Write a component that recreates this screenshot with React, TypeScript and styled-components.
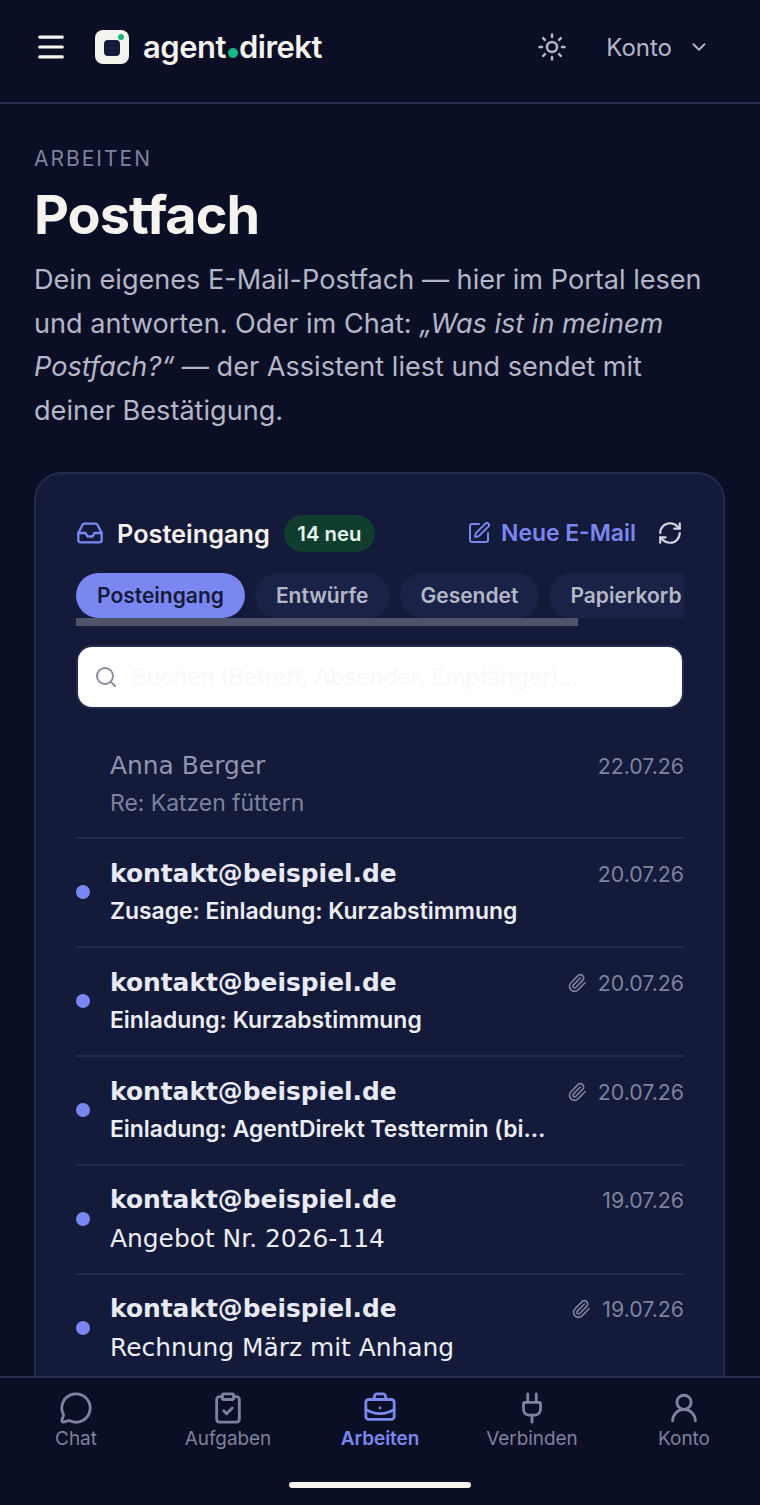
import React from "react";
import styled, { createGlobalStyle } from "styled-components";
import {
  BriefcaseBusiness,
  ChevronDown,
  ClipboardCheck,
  Inbox,
  Menu,
  MessageCircle,
  Paperclip,
  Plug,
  RefreshCw,
  Search,
  SquarePen,
  Sun,
  UserRound,
} from "lucide-react";

const GlobalStyle = createGlobalStyle`
  html, body { margin: 0; padding: 0; background: #0b0f26; }
  * { box-sizing: border-box; }
  body { font-family: Inter, "Liberation Sans", sans-serif; }
`;

const Page = styled.div`
  width: 760px;
  height: 1505px;
  display: flex;
  flex-direction: column;
  overflow: hidden;
  background: #0b0f26;
`;

const Header = styled.header`
  height: 104px;
  flex: none;
  display: flex;
  align-items: center;
  padding: 0 50px 8px 34px;
  border-bottom: 2px solid #232a4d;
`;

const MenuButton = styled.span`
  display: flex;
  color: #f5f3ee;
  margin-right: 27px;
`;

const LogoMark = styled.span`
  position: relative;
  width: 34px;
  height: 34px;
  border-radius: 8px;
  background: #f5f3ee;
  display: flex;
  align-items: center;
  justify-content: center;
  margin-right: 14px;

  &::before {
    content: "";
    width: 16px;
    height: 16px;
    margin-top: 2px;
    border-radius: 4px;
    background: #141a3a;
  }

  &::after {
    content: "";
    position: absolute;
    top: 4px;
    right: 5px;
    width: 6px;
    height: 6px;
    border-radius: 50%;
    background: #10b981;
  }
`;

const Wordmark = styled.span`
  font-size: 31px;
  font-weight: 600;
  letter-spacing: -0.5px;
  color: #f5f3ee;
  display: flex;
  align-items: baseline;
  margin-bottom: 2px;
`;

const WordDot = styled.span`
  width: 10px;
  height: 10px;
  margin: 0 1px 0 2px;
  border-radius: 50%;
  background: #10b981;
`;

const HeaderRight = styled.div`
  margin-left: auto;
  display: flex;
  align-items: center;
  color: #b4b7c6;
`;

const AccountLabel = styled.span`
  font-size: 24px;
  margin-left: 39px;
  margin-right: 16px;
`;

const Main = styled.main`
  flex: 1;
  min-height: 0;
  overflow: hidden;
  padding: 42px 35px 0 34px;
`;

const Eyebrow = styled.div`
  font-size: 21px;
  line-height: 26px;
  letter-spacing: 2px;
  color: #7e829c;
`;

const Title = styled.h1`
  margin: 12px 0 0;
  font-size: 54px;
  line-height: 62px;
  font-weight: 700;
  letter-spacing: -1px;
  color: #f5f3ee;
`;

const Intro = styled.p`
  margin: 12px 0 0;
  font-size: 27.1px;
  line-height: 43.6px;
  color: #b4b7c6;

  em {
    font-style: italic;
  }
`;

const Card = styled.section`
  margin-top: 40px;
  padding: 41px 40px 0;
  height: 960px;
  background: #141a3a;
  border: 2px solid #232a4d;
  border-radius: 28px;
`;

const CardHead = styled.div`
  display: flex;
  align-items: center;
  height: 36px;
  width: 608px;
`;

const CardTitle = styled.span`
  margin-left: 13px;
  font-size: 25.3px;
  font-weight: 600;
  color: #f5f3ee;
`;

const Badge = styled.span`
  margin-left: 14px;
  height: 37px;
  padding: 0 13.5px;
  display: flex;
  align-items: center;
  border-radius: 19px;
  background: #0f3d2e;
  color: #e6f5ee;
  font-size: 20.3px;
  font-weight: 600;
`;

const NewMail = styled.span`
  margin-left: auto;
  display: flex;
  align-items: center;
  gap: 10px;
  color: #7b87f0;
  font-size: 22.9px;
  font-weight: 600;
`;

const Refresh = styled.span`
  display: flex;
  margin-left: 21px;
  margin-right: 1px;
  color: #d6d8e2;
`;

const TabScroller = styled.div`
  margin-top: 22px;
  height: 60px;
  width: 608px;
  overflow: hidden;
  position: relative;
`;

const TabRow = styled.div`
  display: flex;
  gap: 10px;
  width: 800px;
`;

const Tab = styled.span<{ $active?: boolean }>`
  height: 45px;
  padding: 0 21px;
  display: flex;
  align-items: center;
  border-radius: 23px;
  font-size: 21px;
  font-weight: 600;
  background: ${({ $active }) => ($active ? "#7b87f0" : "#1b2247")};
  color: ${({ $active }) => ($active ? "#141a3a" : "#b4b7c6")};
`;

const ScrollThumb = styled.div`
  position: absolute;
  left: 0;
  top: 45px;
  width: 502px;
  height: 8px;
  background: #50526a;
`;

const SearchBox = styled.div`
  margin-top: 12px;
  height: 64px;
  display: flex;
  align-items: center;
  gap: 14px;
  padding: 0 16px;
  width: 608px;
  background: #fff;
  border: 2px solid #232a4d;
  border-radius: 16px;
  color: #8a8d9f;
  font-size: 23px;
`;

const Placeholder = styled.span`
  color: #f8f8f9;
`;

const MailList = styled.div`
  width: 608px;
  margin-top: 19.5px;
`;

const MailRow = styled.div`
  height: 109px;
  display: flex;
  align-items: center;
  border-bottom: 2px solid #232a4d;

  &:first-child {
    height: 110px;
    padding-top: 4px;
  }
`;

const UnreadDot = styled.span<{ $unread: boolean }>`
  flex: none;
  width: 14px;
  height: 14px;
  margin-right: 20px;
  border-radius: 50%;
  background: ${({ $unread }) => ($unread ? "#7b87f0" : "transparent")};
`;

const MailBody = styled.div`
  flex: 1;
  min-width: 0;
`;

const MailTop = styled.div`
  display: flex;
  align-items: center;
  justify-content: space-between;
`;

const Sender = styled.span<{ $unread: boolean }>`
  font-family: "DejaVu Sans", sans-serif;
  font-size: 24.9px;
  line-height: 32px;
  font-weight: ${({ $unread }) => ($unread ? 700 : 400)};
  color: ${({ $unread }) => ($unread ? "#e8eaf8" : "#9094ad")};
`;

const MailMeta = styled.span`
  display: flex;
  align-items: center;
  gap: 11px;
  color: #7e829c;
  font-size: 21.3px;
`;

const Subject = styled.div<{ $tone: "read" | "bold" | "plain" }>`
  margin-top: ${({ $tone }) => ($tone === "plain" ? "7px" : "5px")};
  width: 440px;
  white-space: nowrap;
  overflow: hidden;
  text-overflow: ellipsis;
  line-height: 32px;
  font-family: ${({ $tone }) => ($tone === "plain" ? '"DejaVu Sans", sans-serif' : "inherit")};
  font-size: ${({ $tone }) => ($tone === "plain" ? "24.9px" : "22.9px")};
  font-weight: ${({ $tone }) => ($tone === "bold" ? 600 : 400)};
  color: ${({ $tone }) => ($tone === "read" ? "#7e829c" : "#eceef9")};
`;

const BottomNav = styled.nav`
  flex: none;
  height: 129px;
  border-top: 2px solid #232a4d;
  background: #0b0f26;
  display: flex;
  flex-direction: column;
  align-items: center;
`;

const NavRow = styled.div`
  width: 100%;
  display: grid;
  grid-template-columns: repeat(5, 1fr);
  padding-top: 13px;
`;

const NavItem = styled.div<{ $active?: boolean }>`
  display: flex;
  flex-direction: column;
  align-items: center;
  gap: 2px;
  font-size: 18.9px;
  line-height: 24px;
  font-weight: ${({ $active }) => ($active ? 600 : 400)};
  color: ${({ $active }) => ($active ? "#7b87f0" : "#7e829c")};
`;

const HomeBar = styled.div`
  width: 182px;
  height: 6px;
  margin-top: 31px;
  border-radius: 3px;
  background: #f5f3ee;
`;

const mails = [
  { from: "Anna Berger", subject: "Re: Katzen füttern", date: "22.07.26", unread: false, clip: false, tone: "read" as const },
  { from: "kontakt@beispiel.de", subject: "Zusage: Einladung: Kurzabstimmung", date: "20.07.26", unread: true, clip: false, tone: "bold" as const },
  { from: "kontakt@beispiel.de", subject: "Einladung: Kurzabstimmung", date: "20.07.26", unread: true, clip: true, tone: "bold" as const },
  { from: "kontakt@beispiel.de", subject: "Einladung: AgentDirekt Testtermin (bitte bestätigen)", date: "20.07.26", unread: true, clip: true, tone: "bold" as const },
  { from: "kontakt@beispiel.de", subject: "Angebot Nr. 2026-114", date: "19.07.26", unread: true, clip: false, tone: "plain" as const },
  { from: "kontakt@beispiel.de", subject: "Rechnung März mit Anhang", date: "19.07.26", unread: true, clip: true, tone: "plain" as const },
];

const navItems = [
  { label: "Chat", icon: MessageCircle },
  { label: "Aufgaben", icon: ClipboardCheck },
  { label: "Arbeiten", icon: BriefcaseBusiness, active: true },
  { label: "Verbinden", icon: Plug },
  { label: "Konto", icon: UserRound },
];

export default function App() {
  return (
    <Page>
      <GlobalStyle />
      <Header>
        <MenuButton>
          <Menu size={34} strokeWidth={2.2} />
        </MenuButton>
        <LogoMark />
        <Wordmark>
          agent
          <WordDot />
          direkt
        </Wordmark>
        <HeaderRight>
          <Sun size={30} strokeWidth={2} />
          <AccountLabel>Konto</AccountLabel>
          <ChevronDown size={22} strokeWidth={2} />
        </HeaderRight>
      </Header>
      <Main>
        <Eyebrow>ARBEITEN</Eyebrow>
        <Title>Postfach</Title>
        <Intro>
          Dein eigenes E-Mail-Postfach — hier im Portal lesen und antworten. Oder im Chat:{" "}
          <em>„Was ist in meinem Postfach?“</em> — der Assistent liest und sendet mit deiner Bestätigung.
        </Intro>
        <Card>
          <CardHead>
            <Inbox size={28} color="#7b87f0" strokeWidth={2} />
            <CardTitle>Posteingang</CardTitle>
            <Badge>14 neu</Badge>
            <NewMail>
              <SquarePen size={24} strokeWidth={2} />
              Neue E-Mail
            </NewMail>
            <Refresh>
              <RefreshCw size={26} strokeWidth={2} />
            </Refresh>
          </CardHead>
          <TabScroller>
            <TabRow>
              <Tab $active>Posteingang</Tab>
              <Tab>Entwürfe</Tab>
              <Tab>Gesendet</Tab>
              <Tab>Papierkorb</Tab>
            </TabRow>
            <ScrollThumb />
          </TabScroller>
          <SearchBox>
            <Search size={24} strokeWidth={2} />
            <Placeholder>Suchen (Betreff, Absender, Empfänger)…</Placeholder>
          </SearchBox>
          <MailList>
            {mails.map((mail, index) => (
              <MailRow key={index}>
                <UnreadDot $unread={mail.unread} />
                <MailBody>
                  <MailTop>
                    <Sender $unread={mail.unread}>{mail.from}</Sender>
                    <MailMeta>
                      {mail.clip && <Paperclip size={20} strokeWidth={2} />}
                      {mail.date}
                    </MailMeta>
                  </MailTop>
                  <Subject $tone={mail.tone}>{mail.subject}</Subject>
                </MailBody>
              </MailRow>
            ))}
          </MailList>
        </Card>
      </Main>
      <BottomNav>
        <NavRow>
          {navItems.map(({ label, icon: Icon, active }) => (
            <NavItem key={label} $active={active}>
              <Icon size={34} strokeWidth={2} />
              {label}
            </NavItem>
          ))}
        </NavRow>
        <HomeBar />
      </BottomNav>
    </Page>
  );
}
